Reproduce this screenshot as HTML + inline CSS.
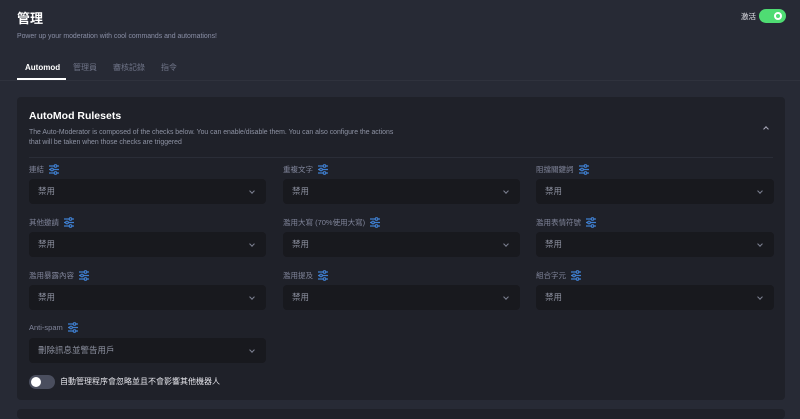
<!DOCTYPE html><html><head><meta charset="utf-8"><style>
*{margin:0;padding:0;box-sizing:border-box}
body{width:800px;height:411px;overflow:hidden;background:#272a35;font-family:"Liberation Sans","Noto Sans CJK TC",sans-serif;color:#c9ccd6;position:relative}
.a{position:absolute}
.lbl{font-size:7.5px;color:#80859a;display:flex;align-items:center;gap:5px;position:absolute}
.sel{position:absolute;height:25px;background:#18191e;border-radius:4px;font-size:8.5px;color:#8d91a0;padding-left:9px;line-height:25px}
.sel:after{content:"";position:absolute;right:12px;top:10px;width:3px;height:3px;border-right:1px solid #7d8192;border-bottom:1px solid #7d8192;transform:rotate(45deg)}
</style></head><body>
<div class="a" style="left:17px;top:8px;font-size:13px;font-weight:bold;color:#fff">管理</div>
<div class="a" style="left:17px;top:33px;font-size:6.9px;color:#8a8fa6">Power up your moderation with cool commands and automations!</div>
<div class="a" style="left:741px;top:11px;font-size:7.5px;color:#e8e8ee">激活</div>
<div class="a" style="left:759px;top:9px;width:27px;height:14px;border-radius:7px;background:#4fdc73"></div>
<div class="a" style="left:774px;top:12px;width:8px;height:8px;border-radius:50%;border:2px solid #fff;background:#4fdc73"></div>
<div class="a" style="left:25px;top:63px;font-size:8px;font-weight:bold;color:#fff">Automod</div>
<div class="a" style="left:73px;top:62px;font-size:8px;color:#6f7488">管理員</div>
<div class="a" style="left:113px;top:62px;font-size:8px;color:#6f7488">審核記錄</div>
<div class="a" style="left:161px;top:62px;font-size:8px;color:#6f7488">指令</div>
<div class="a" style="left:0;top:80px;width:800px;height:1px;background:#2f323d"></div>
<div class="a" style="left:17px;top:78px;width:49px;height:2px;background:#fff"></div>
<div class="a" style="left:17px;top:97px;width:768px;height:303px;background:#1f2129;border-radius:4px"></div>
<div class="a" style="left:17px;top:409px;width:768px;height:10px;background:#1f2129;border-radius:4px"></div>
<div class="a" style="left:29px;top:110px;font-size:10.5px;font-weight:bold;color:#fff">AutoMod Rulesets</div>
<div class="a" style="left:29px;top:128px;font-size:6.9px;line-height:10px;color:#8e93a4">The Auto-Moderator is composed of the checks below. You can enable/disable them. You can also configure the actions<br>that will be taken when those checks are triggered</div>
<div class="a" style="left:764px;top:127px;width:4px;height:4px;border-left:1px solid #aab;border-top:1px solid #aab;transform:rotate(45deg)"></div>
<div class="a" style="left:29px;top:157px;width:744px;height:1px;background:#2a2d37"></div>
<svg width="0" height="0" style="position:absolute"><defs><g id="ic"><g stroke="#3f7fd0" stroke-width="1.2" fill="none"><path d="M0 2H10M0 5.5H10M0 9H10"/><circle cx="6.5" cy="2" r="1.3" fill="#1f2129"/><circle cx="3" cy="5.5" r="1.3" fill="#1f2129"/><circle cx="6.5" cy="9" r="1.3" fill="#1f2129"/></g></g></defs></svg>
<div class="lbl" style="left:29px;top:164px">連結<svg width="10" height="11"><use href="#ic"/></svg></div>
<div class="lbl" style="left:283px;top:164px">重複文字<svg width="10" height="11"><use href="#ic"/></svg></div>
<div class="lbl" style="left:536px;top:164px">阻擋關鍵詞<svg width="10" height="11"><use href="#ic"/></svg></div>
<div class="sel" style="left:29px;top:179px;width:237px">禁用</div>
<div class="sel" style="left:283px;top:179px;width:237px">禁用</div>
<div class="sel" style="left:536px;top:179px;width:238px">禁用</div>
<div class="lbl" style="left:29px;top:217px">其他邀請<svg width="10" height="11"><use href="#ic"/></svg></div>
<div class="lbl" style="left:283px;top:217px">濫用大寫 (70%使用大寫)<svg width="10" height="11"><use href="#ic"/></svg></div>
<div class="lbl" style="left:536px;top:217px">濫用表情符號<svg width="10" height="11"><use href="#ic"/></svg></div>
<div class="sel" style="left:29px;top:232px;width:237px">禁用</div>
<div class="sel" style="left:283px;top:232px;width:237px">禁用</div>
<div class="sel" style="left:536px;top:232px;width:238px">禁用</div>
<div class="lbl" style="left:29px;top:270px">濫用暴露內容<svg width="10" height="11"><use href="#ic"/></svg></div>
<div class="lbl" style="left:283px;top:270px">濫用提及<svg width="10" height="11"><use href="#ic"/></svg></div>
<div class="lbl" style="left:536px;top:270px">組合字元<svg width="10" height="11"><use href="#ic"/></svg></div>
<div class="sel" style="left:29px;top:285px;width:237px">禁用</div>
<div class="sel" style="left:283px;top:285px;width:237px">禁用</div>
<div class="sel" style="left:536px;top:285px;width:238px">禁用</div>
<div class="lbl" style="left:29px;top:322px">Anti-spam<svg width="10" height="11"><use href="#ic"/></svg></div>
<div class="sel" style="left:29px;top:338px;width:237px">刪除訊息並警告用戶</div>
<div class="a" style="left:29px;top:375px;width:26px;height:14px;border-radius:7px;background:#4a4e5e"></div>
<div class="a" style="left:31px;top:377px;width:10px;height:10px;border-radius:50%;background:#fff"></div>
<div class="a" style="left:60px;top:376px;font-size:8px;color:#e8e8ee">自動管理程序會忽略並且不會影響其他機器人</div>
</body></html>
